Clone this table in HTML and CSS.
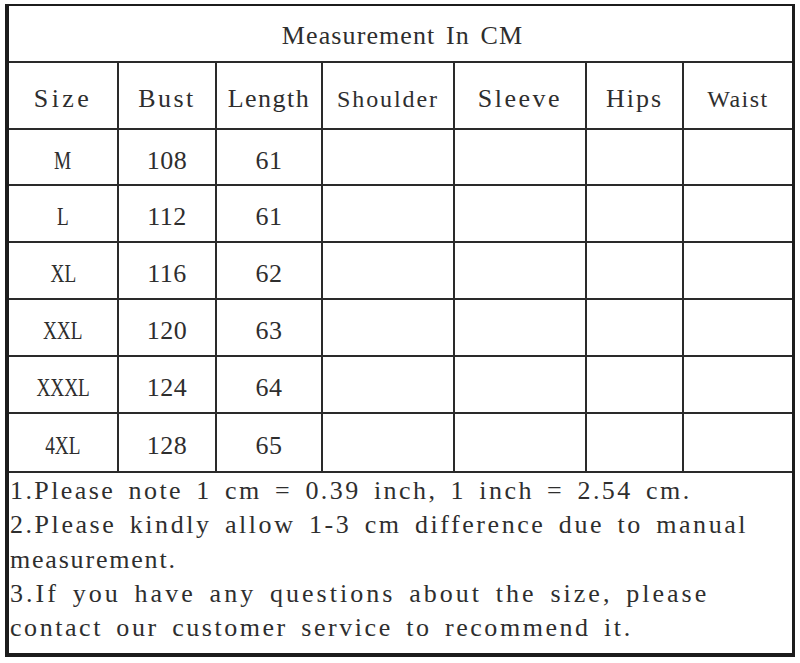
FILE: index.html
```html
<!DOCTYPE html>
<html lang="en">
<head>
<meta charset="utf-8">
<title>Measurement In CM</title>
<link rel="stylesheet" href="styles.css">
</head>
<body>
<div class="chart">
  <div class="cell title"><span>Measurement In CM</span></div>

  <div class="cell head ls-34"><span>Size</span></div>
  <div class="cell head ls-24"><span>Bust</span></div>
  <div class="cell head ls-15"><span>Length</span></div>
  <div class="cell head small ls-19"><span>Shoulder</span></div>
  <div class="cell head ls-25"><span>Sleeve</span></div>
  <div class="cell head ls-20"><span>Hips</span></div>
  <div class="cell head small ls-15"><span>Waist</span></div>

  <div class="cell size"><span>M</span></div>
  <div class="cell num"><span>108</span></div>
  <div class="cell num"><span>61</span></div>
  <div class="cell"></div><div class="cell"></div><div class="cell"></div><div class="cell"></div>

  <div class="cell size"><span>L</span></div>
  <div class="cell num"><span>112</span></div>
  <div class="cell num"><span>61</span></div>
  <div class="cell"></div><div class="cell"></div><div class="cell"></div><div class="cell"></div>

  <div class="cell size"><span>XL</span></div>
  <div class="cell num"><span>116</span></div>
  <div class="cell num"><span>62</span></div>
  <div class="cell"></div><div class="cell"></div><div class="cell"></div><div class="cell"></div>

  <div class="cell size"><span>XXL</span></div>
  <div class="cell num"><span>120</span></div>
  <div class="cell num"><span>63</span></div>
  <div class="cell"></div><div class="cell"></div><div class="cell"></div><div class="cell"></div>

  <div class="cell size"><span>XXXL</span></div>
  <div class="cell num"><span>124</span></div>
  <div class="cell num"><span>64</span></div>
  <div class="cell"></div><div class="cell"></div><div class="cell"></div><div class="cell"></div>

  <div class="cell size"><span>4XL</span></div>
  <div class="cell num"><span>128</span></div>
  <div class="cell num"><span>65</span></div>
  <div class="cell"></div><div class="cell"></div><div class="cell"></div><div class="cell"></div>

  <div class="notes">
    <p class="notes-text">
      <span class="line l1">1.Please note 1 cm = 0.39 inch, 1 inch = 2.54 cm.</span>
      <span class="line l2">2.Please kindly allow 1-3 cm difference due to manual</span>
      <span class="line l3">measurement.</span>
      <span class="line l4">3.If you have any questions about the size, please</span>
      <span class="line l5">contact our customer service to recommend it.</span>
    </p>
  </div>
</div>
</body>
</html>
```

FILE: styles.css
```css
html, body {
  margin: 0;
  padding: 0;
  background: #ffffff;
}

body {
  font-family: "Liberation Serif", "Times New Roman", serif;
  color: #2e2e2e;
}

.chart {
  margin: 4px 0 0 5px;
  width: 783px;
  border-style: solid;
  border-color: #1c1c1c;
  border-width: 2px 3px 4px 4px;
  display: grid;
  grid-template-columns: 108px 96px 104px 130px 130px 95px 108px;
  grid-template-rows: 55px 65px 54px 55px 55px 55px 55px 57px 180px;
  gap: 2px;
  background: #2a2a2a;
}

.cell {
  background: #ffffff;
  display: flex;
  align-items: center;
  justify-content: center;
  padding-top: 7px;
  box-sizing: border-box;
  font-size: 26px;
  white-space: nowrap;
}

.cell span {
  display: inline-block;
}

.title {
  grid-column: 1 / -1;
  padding-top: 5px;
  padding-left: 4px;
  letter-spacing: 1.1px;
  word-spacing: 3px;
}

.head.small {
  font-size: 24px;
}

.ls-34 { letter-spacing: 3.4px; }
.ls-25 { letter-spacing: 2.5px; }
.ls-24 { letter-spacing: 2.4px; }
.ls-20 { letter-spacing: 2px; }
.ls-19 { letter-spacing: 1.9px; }
.ls-15 { letter-spacing: 1.5px; }

.num {
  letter-spacing: 0.5px;
}

.size span {
  transform: scaleX(0.74);
}

.notes {
  grid-column: 1 / -1;
  background: #ffffff;
  padding: 1px 0 0 1px;
  box-sizing: border-box;
}

.notes-text {
  margin: 0;
  font-size: 26px;
  line-height: 34.3px;
  word-spacing: 4.4px;
  white-space: nowrap;
}

.line {
  display: block;
}

.l1 { letter-spacing: 2.42px; }
.l2 { letter-spacing: 2.55px; }
.l3 { letter-spacing: 1.8px; }
.l4 { letter-spacing: 3px; }
.l5 { letter-spacing: 2.55px; }
```
